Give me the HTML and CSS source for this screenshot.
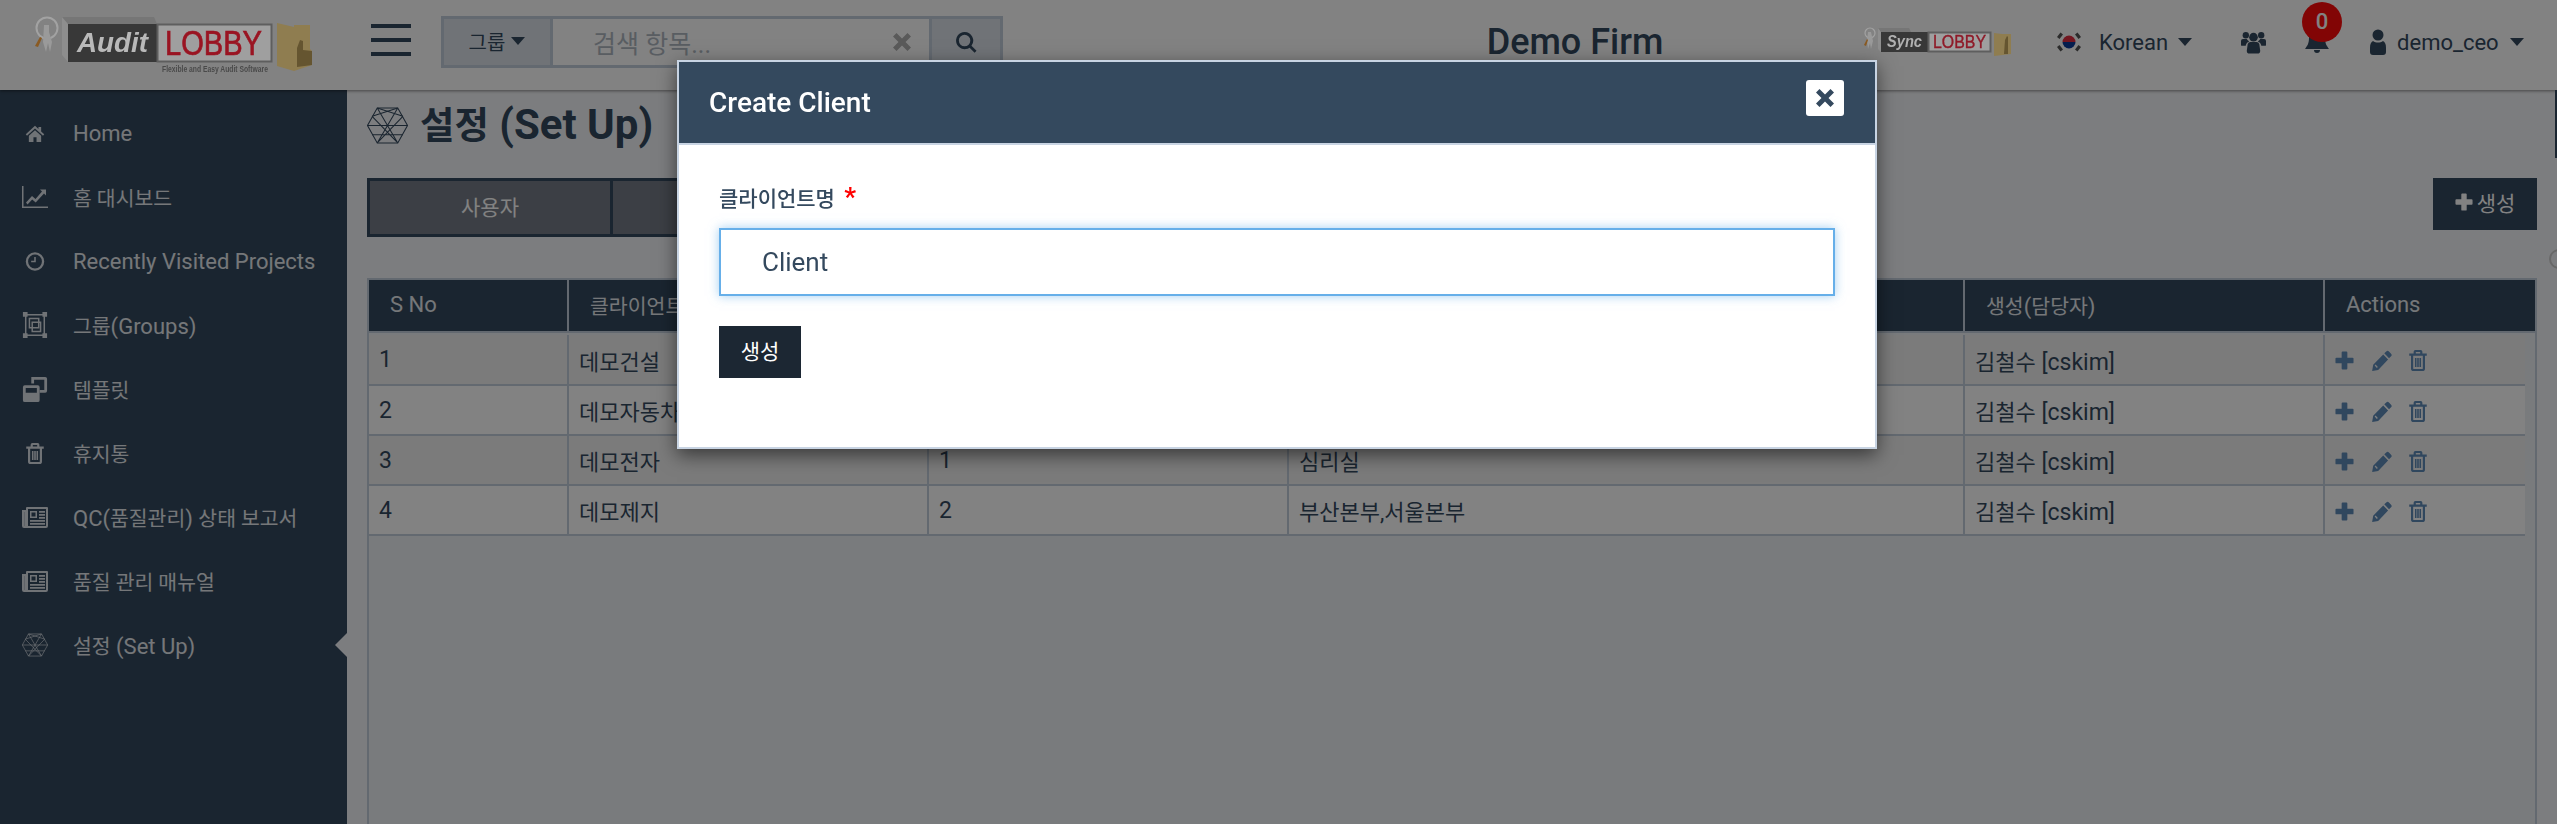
FILE: index.html
```html
<!DOCTYPE html>
<html lang="ko">
<head>
<meta charset="utf-8">
<title>Audit Lobby - 설정</title>
<link rel="stylesheet" href="styles.css">
</head>
<body>
<svg class="defs" width="0" height="0" aria-hidden="true">
  <symbol id="i-home" viewBox="0 0 26 24"><path d="M13 2 1 13l1.6 1.8L13 5.4l10.400 9.400L25 13l-4-3.700V3.500h-3.500v2.600zM5 15v8h6v-6h4v6h6v-8L13 7.800z"/></symbol>
  <symbol id="i-chart" viewBox="0 0 26 24"><path d="M0 1h1.500v20.500H26V23H0z"/><path d="M4 17.500l6-6.500 3.500 3L20 6.500 18 4.500h6v6l-2-2-8.300 9-3.500-3-4.700 5z"/></symbol>
  <symbol id="i-clock" viewBox="0 0 26 26"><path fill-rule="evenodd" d="M13 1a12 12 0 1 0 0 24 12 12 0 0 0 0-24zm0 3a9 9 0 1 1 0 18 9 9 0 0 1 0-18z"/><path d="M12 7h2v7H8v-2h4z"/></symbol>
  <symbol id="i-group" viewBox="0 0 26 28"><g fill="none" stroke="currentColor" stroke-width="1.600"><path d="M3 3h20v22H3z"/><path d="M7 7h10v10H7z"/><path d="M10 11h9v10h-9z"/></g><path d="M0 0h5v5H0zM21 0h5v5h-5zM0 23h5v5H0zM21 23h5v5h-5z"/></symbol>
  <symbol id="i-clone" viewBox="0 0 26 28"><path fill-rule="evenodd" d="M9 1h15a2 2 0 0 1 2 2v13a2 2 0 0 1-2 2h-6v-3h5V4H12v4H9z"/><path d="M2 10h14a2 2 0 0 1 2 2v14a2 2 0 0 1-2 2H2a2 2 0 0 1-2-2V12a2 2 0 0 1 2-2zm1 3v5h12v-5z" fill-rule="evenodd"/></symbol>
  <symbol id="i-trash" viewBox="0 0 20 24"><path fill-rule="evenodd" d="M7 0h6a2 2 0 0 1 2 2v2h5v2.500h-2V21a3 3 0 0 1-3 3H5a3 3 0 0 1-3-3V6.500H0V4h5V2a2 2 0 0 1 2-2zm.500 2.300V4h5V2.300zM4.500 6.500V21a.7.7 0 0 0 .5.6h10a.7.7 0 0 0 .5-.6V6.500z"/><path d="M6.500 9h1.800v10.500H6.500zM9.100 9h1.800v10.500H9.100zM11.700 9h1.800v10.500h-1.800z"/></symbol>
  <symbol id="i-news" viewBox="0 0 26 24"><path fill-rule="evenodd" d="M5 2h20a1 1 0 0 1 1 1v18a2 2 0 0 1-2 2H2a2 2 0 0 1-2-2V5h4V3a1 1 0 0 1 1-1zm1 2v17H2.200V7H2v14h22V4z"/><path d="M8 6h7v7H8zm1.500 1.500v4h4v-4zM17 6h6v1.700h-6zM17 9h6v1.700h-6zM17 12h6v1.700h-6zM8 15h15v1.700H8zM8 18h15v1.700H8z"/></symbol>
  <symbol id="i-hex" viewBox="0 0 40 36"><g fill="none" stroke="currentColor" stroke-width="1"><path d="M10 1h20l9.500 17L30 35H10L.5 18z"/><path d="M10 1l20 34M30 1L10 35M.5 18h39M5 9l25 26M35 9 10 35M10 1l25 8M30 1 5 9M5 27h30"/></g></symbol>
  <symbol id="i-plus" viewBox="0 0 20 20"><path d="M7 1.500a1 1 0 0 1 1-1h4a1 1 0 0 1 1 1V7h5.500a1 1 0 0 1 1 1v4a1 1 0 0 1-1 1H13v5.500a1 1 0 0 1-1 1H8a1 1 0 0 1-1-1V13H1.500a1 1 0 0 1-1-1V8a1 1 0 0 1 1-1H7z"/></symbol>
  <symbol id="i-pencil" viewBox="0 0 21 22"><path d="M15.500 1.500a2 2 0 0 1 2.800 0l2.200 2.300a2 2 0 0 1 0 2.800l-2.100 2.100-5-5.200z"/><path fill-rule="evenodd" d="M12.300 4.600l5.100 5.300L7 21 .7 22 1.800 15.500zM3.300 16.300l2.400 2.500 1-1-2.400-2.500z"/></symbol>
  <symbol id="i-x" viewBox="0 0 18 18"><path d="M3.500 0 9 5.500 14.500 0 18 3.500 12.500 9l5.500 5.500-3.500 3.500L9 12.500 3.500 18 0 14.500 5.500 9 0 3.500z"/></symbol>
  <symbol id="i-search" viewBox="0 0 22 22"><path fill-rule="evenodd" d="M9 0a9 9 0 0 1 7.200 14.400l5.300 5.300-2 2-5.300-5.300A9 9 0 1 1 9 0zm0 3a6 6 0 1 0 0 12A6 6 0 0 0 9 3z"/></symbol>
  <symbol id="i-users" viewBox="0 0 26 24"><circle cx="13" cy="7" r="4.500"/><circle cx="5" cy="5" r="3.300"/><circle cx="21" cy="5" r="3.300"/><path d="M7 14a3 3 0 0 1 3-2h6a3 3 0 0 1 3 2l1 7a3 3 0 0 1-3 3H9a3 3 0 0 1-3-3z"/><path d="M0 11a2 2 0 0 1 2-2h4c.6 1 1.300 1.800 2.500 2.500A5 5 0 0 0 5 15v1H1a1 1 0 0 1-1-1zM26 11a2 2 0 0 0-2-2h-4c-.6 1-1.300 1.800-2.500 2.500A5 5 0 0 1 21 15v1h4a1 1 0 0 0 1-1z"/></symbol>
  <symbol id="i-bell" viewBox="0 0 24 26"><path d="M12 0a2 2 0 0 1 2 2c4 1 6 4 6 8 0 6 2 8 4 11H0c2-3 4-5 4-11 0-4 2-7 6-8a2 2 0 0 1 2-2zM9 22h6a3 3 0 0 1-6 0z"/></symbol>
  <symbol id="i-user" viewBox="0 0 16 26"><circle cx="8" cy="6" r="5.500"/><path d="M3 12c3 2 7 2 10 0 2 1 3 3 3 7v4a3 3 0 0 1-3 3H3a3 3 0 0 1-3-3v-4c0-4 1-6 3-7z"/></symbol>
</svg>

<div class="app">
  <header class="topbar">
    <svg class="logo" viewBox="0 0 320 84" width="320" height="84" role="img" aria-label="Audit Lobby">
      <circle class="lg-man" cx="47" cy="28" r="10.500" fill="none" stroke-width="2"/>
      <path class="lg-fill" d="M44 25h5v7l3 10-2 10-2-9-2 9-3-10z"/>
      <path class="lg-orange" d="M35 46l5-9 2 1-4 9z"/>
      <path class="lg-side" d="M62 17h3l3 7v38l-6-7z"/>
      <path class="lg-top" d="M62 17h92l3 7H68z"/>
      <rect class="lg-dark" x="68" y="24" width="90" height="38"/>
      <rect class="lg-white" x="157.500" y="24.500" width="114" height="37"/>
      <text class="lg-audit" x="77" y="52" textLength="71" lengthAdjust="spacingAndGlyphs">Audit</text>
      <text class="lg-lobby" x="165" y="55" textLength="97" lengthAdjust="spacingAndGlyphs">LOBBY</text>
      <text class="lg-tag" x="162" y="72" textLength="106" lengthAdjust="spacingAndGlyphs">Flexible and Easy Audit Software</text>
      <path class="lg-folder" d="M277 23l17 4V71l-17-5z"/>
      <path class="lg-folder" d="M294 25h16v24l2 2v14l-18 6z"/>
      <path class="lg-shade" d="M297 67V48l3-8 3 1v9l9 1v14z"/>
    </svg>
    <button class="burger" type="button" aria-label="menu"><span></span><span></span><span></span></button>
    <form class="search">
      <button class="search-group" type="button"><span>그룹</span><i class="caret"></i></button>
      <div class="search-field">
        <span class="search-ph">검색 항목...</span>
        <svg class="search-x"><use href="#i-x"/></svg>
      </div>
      <button class="search-go" type="button" aria-label="search"><svg><use href="#i-search"/></svg></button>
    </form>
    <div class="firm">Demo Firm</div>
    <svg class="sync" viewBox="0 0 148 30" width="148" height="30" role="img" aria-label="Sync Lobby">
      <circle class="lg-man" cx="7" cy="6" r="5" fill="none" stroke-width="1.200"/>
      <path class="lg-fill" d="M5 5h3l2 9-2 8-1-6-2 6-1-8z"/>
      <path class="lg-orange" d="M1 18l3-6 1 1-2 6z"/>
      <path class="lg-side" d="M15 1h2l1 4v20l-3-3z"/>
      <path class="lg-top" d="M15 1h31l2 4H18z"/>
      <rect class="lg-dark" x="18" y="5" width="48" height="20"/>
      <rect class="lg-white" x="65.500" y="5.500" width="62" height="19"/>
      <text class="sy-sync" x="24" y="20" textLength="35" lengthAdjust="spacingAndGlyphs">Sync</text>
      <text class="sy-lobby" x="70" y="21" textLength="53" lengthAdjust="spacingAndGlyphs">LOBBY</text>
      <path class="lg-folder" d="M131 6l8 1h9v20l-17 2z"/>
      <path class="lg-shade" d="M141 27l1-14 2-4 1 1v17z"/>
    </svg>
    <div class="lang">
      <svg class="flag" viewBox="0 0 26 22" width="26" height="22" aria-hidden="true">
        <path class="fl-red" d="M6.500 11a6.500 6.500 0 0 1 13 0z"/>
        <path class="fl-blue" d="M6.500 11a6.500 6.500 0 0 0 13 0z"/>
        <path class="fl-bar" d="M1 6l3.500-4.500 2.500 2L3.500 8zM19 3.500l2.500-2L25 6l-2.500 2zM1 16l2.500-2L7 18.500l-2.500 2zM19 18.500l3.500-4.500 2.500 2-3.500 4.500z"/>
      </svg>
      <span>Korean</span><i class="caret"></i>
    </div>
    <svg class="ic-users"><use href="#i-users"/></svg>
    <div class="bell">
      <svg><use href="#i-bell"/></svg>
      <span class="badge">0</span>
    </div>
    <div class="account">
      <svg><use href="#i-user"/></svg>
      <span>demo_ceo</span><i class="caret"></i>
    </div>
  </header>

  <div class="body">
    <nav class="side">
      <a class="side-item"><svg class="sm"><use href="#i-home"/></svg><span>Home</span></a>
      <a class="side-item"><svg><use href="#i-chart"/></svg><span class="ko">홈 대시보드</span></a>
      <a class="side-item"><svg class="sm"><use href="#i-clock"/></svg><span>Recently Visited Projects</span></a>
      <a class="side-item"><svg><use href="#i-group"/></svg><span><span class="ko">그룹</span>(Groups)</span></a>
      <a class="side-item"><svg><use href="#i-clone"/></svg><span class="ko">템플릿</span></a>
      <a class="side-item"><svg class="sm"><use href="#i-trash"/></svg><span class="ko">휴지통</span></a>
      <a class="side-item"><svg><use href="#i-news"/></svg><span>QC(<span class="ko">품질관리</span>) <span class="ko">상태 보고서</span></span></a>
      <a class="side-item"><svg><use href="#i-news"/></svg><span class="ko">품질 관리 매뉴얼</span></a>
      <a class="side-item is-active"><svg><use href="#i-hex"/></svg><span><span class="ko">설정</span> (Set Up)</span></a>
    </nav>

    <main class="main">
      <h1 class="page-title"><svg><use href="#i-hex"/></svg><span><span class="ko">설정</span> (Set Up)</span></h1>
      <div class="toolbar">
        <div class="tabs">
          <a class="tab">사용자</a>
          <a class="tab"></a>
        </div>
        <button class="btn-create" type="button"><svg><use href="#i-plus"/></svg>생성</button>
      </div>
      <div class="grid">
        <table class="grid-head">
          <colgroup><col class="c1"><col class="c2"><col class="c3"><col class="c4"><col class="c5"><col></colgroup>
          <thead><tr><th>S No</th><th class="ko">클라이언트명</th><th></th><th></th><th><span class="ko">생성</span>(<span class="ko">담당자</span>)</th><th>Actions</th></tr></thead>
        </table>
        <div class="grid-scroll">
          <table class="grid-body">
            <colgroup><col class="c1"><col class="c2"><col class="c3"><col class="c4"><col class="c5"><col></colgroup>
            <tbody>
              <tr><td>1</td><td class="ko">데모건설</td><td></td><td></td><td><span class="ko">김철수</span> [cskim]</td><td class="acts"><svg class="a-plus"><use href="#i-plus"/></svg><svg class="a-pen"><use href="#i-pencil"/></svg><svg class="a-bin"><use href="#i-trash"/></svg></td></tr>
              <tr><td>2</td><td class="ko">데모자동차</td><td></td><td></td><td><span class="ko">김철수</span> [cskim]</td><td class="acts"><svg class="a-plus"><use href="#i-plus"/></svg><svg class="a-pen"><use href="#i-pencil"/></svg><svg class="a-bin"><use href="#i-trash"/></svg></td></tr>
              <tr><td>3</td><td class="ko">데모전자</td><td>1</td><td class="ko">심리실</td><td><span class="ko">김철수</span> [cskim]</td><td class="acts"><svg class="a-plus"><use href="#i-plus"/></svg><svg class="a-pen"><use href="#i-pencil"/></svg><svg class="a-bin"><use href="#i-trash"/></svg></td></tr>
              <tr><td>4</td><td class="ko">데모제지</td><td>2</td><td class="ko">부산본부,서울본부</td><td><span class="ko">김철수</span> [cskim]</td><td class="acts"><svg class="a-plus"><use href="#i-plus"/></svg><svg class="a-pen"><use href="#i-pencil"/></svg><svg class="a-bin"><use href="#i-trash"/></svg></td></tr>
            </tbody>
          </table>
        </div>
      </div>
    </main>
  </div>
  <span class="edge-bar"></span>
  <span class="edge-dot"></span>
</div>

<div class="backdrop"></div>
<section class="modal" role="dialog" aria-label="Create Client">
  <div class="modal-head">
    <h2>Create Client</h2>
    <button class="modal-close" type="button" aria-label="close"><svg><use href="#i-x"/></svg></button>
  </div>
  <form class="modal-body">
    <label class="field-label" for="client">클라이언트명 <em>*</em></label>
    <input class="field-input" id="client" type="text" value="Client">
    <button class="btn-submit" type="button">생성</button>
  </form>
</section>
</body>
</html>
```

FILE: styles.css
```css
* { box-sizing: border-box; }
html, body { margin: 0; height: 100%; overflow: hidden; }
body {
  font-family: Roboto, "Noto Sans CJK KR", sans-serif;
  color: #34495e;
  background: #f4f6f9;
}
.defs { position: absolute; }
button { font-family: inherit; border: 0; padding: 0; }
svg { fill: currentColor; display: block; }

.app { display: flex; flex-direction: column; height: 824px; width: 2557px; position: relative; }

/* top bar */
.topbar {
  height: 90px; flex: none; display: flex; align-items: center; padding-bottom: 6px;
  background: #fff; box-shadow: 0 1px 3px rgba(0,0,0,.45); position: relative;
}
/* the two logo images stay a little brighter than the dimmed page */
.logo, .sync { flex: none; position: relative; z-index: 6; }
.logo text, .sync text { font-family: "Liberation Sans", sans-serif; }
.lg-man { stroke: #a2a2a2; }
.lg-fill { fill: #9a9a9a; }
.lg-orange { fill: #8a5a22; }
.lg-side { fill: #8e8e8e; }
.lg-top { fill: #767676; }
.lg-dark { fill: #383838; }
.lg-white { fill: #9f9f9f; stroke: #5e5e5e; stroke-width: 2; }
.lg-audit { font-size: 28px; font-weight: 700; font-style: italic; fill: #b9b9b9; }
.lg-lobby { font-size: 35px; fill: #9a1422; stroke: #9a1422; stroke-width: .7; }
.lg-tag { font-size: 9px; font-weight: 700; fill: #4a4a4a; }
.lg-folder { fill: #8f7d50; }
.lg-shade { fill: #655530; }
.sy-sync { font-size: 16px; font-weight: 700; font-style: italic; fill: #b0b0b0; }
.sy-lobby { font-size: 19px; fill: #8f1a28; stroke: #8f1a28; stroke-width: .4; }

.burger { width: 40px; height: 32px; margin: 0 0 4px 51px; background: none; display: flex; flex-direction: column; justify-content: space-between; flex: none; }
.burger span { display: block; height: 4px; background: #34495e; }

.caret { display: inline-block; width: 0; height: 0; border-left: 7.500px solid transparent; border-right: 7.500px solid transparent; border-top: 8px solid currentColor; }

.search { width: 562px; height: 52px; margin-left: 30px; display: flex; flex: none; border: 3px solid #c3cfdc; }
.search-group { width: 109px; background: #dbe2ea; color: #34495e; font-size: 20px; display: flex; align-items: center; justify-content: center; gap: 6px; border-right: 3px solid #c3cfdc; padding-bottom: 2px; }
.search-field { flex: 1; display: flex; align-items: center; justify-content: space-between; padding: 0 18px 0 40px; background: #fff; }
.search-ph { font-size: 25px; color: #aeb7c0; }
.search-x { width: 18px; height: 18px; color: #b0b0b0; }
.search-go { width: 71px; background: #dbe2ea; color: #34495e; display: flex; align-items: center; justify-content: center; border-left: 3px solid #c3cfdc; }
.search-go svg { width: 21px; height: 21px; }

.firm { flex: none; width: 180px; margin: 0 198px 0 482px; text-align: center; font-size: 36px; font-weight: 500; color: #34495e; white-space: nowrap; }
.lang { display: flex; align-items: center; margin-left: 45px; font-size: 22px; }
.lang span { margin-left: 17px; }
.lang .caret { margin-left: 10px; }
.fl-red { fill: #e02c40; }
.fl-blue { fill: #0a3a9a; }
.fl-bar { fill: #555; }
.ic-users { width: 25px; height: 24px; margin-left: 49px; flex: none; }
.bell { width: 24px; height: 26px; margin: 0 0 3px 39px; position: relative; flex: none; }
.bell svg { width: 24px; height: 26px; }
.badge { position: absolute; left: -3px; top: -26px; width: 40px; height: 40px; border-radius: 50%; background: #ff0a0a; color: #fff; font-size: 22px; font-weight: 500; display: flex; align-items: center; justify-content: center; }
.account { display: flex; align-items: center; margin-left: 41px; font-size: 22px; }
.account svg { width: 16px; height: 26px; }
.account span { margin-left: 11px; }
.account .caret { margin-left: 11px; }

/* body */
.body { flex: 1; display: flex; min-height: 0; }
.side { width: 347px; flex: none; background: #34495e; padding-top: 11px; color: #e6eaee; }
.side .ko { font-size: .93em; }
.side-item { display: flex; align-items: center; height: 64px; padding-left: 22px; gap: 25px; font-size: 22px; position: relative; }
.side-item svg { width: 26px; height: 26px; flex: none; color: #dbe1e8; }
.side-item svg.sm { width: 20px; height: 21px; margin: 0 3px; }
.is-active::after { content: ""; position: absolute; right: 0; top: 20px; border: 12px solid transparent; border-left: 0; border-right-color: #f4f6f9; }

.main { flex: 1; padding: 0 20px; display: flex; flex-direction: column; min-width: 0; }
.page-title { margin: 0; height: 88px; padding-bottom: 18px; display: flex; align-items: center; gap: 12px; font-size: 42px; font-weight: 700; color: #34495e; line-height: 1; }
.page-title .ko { font-size: .89em; }
.page-title svg { width: 41px; height: 37px; flex: none; }

.toolbar { display: flex; justify-content: space-between; align-items: flex-start; margin-bottom: 41px; height: 59px; }
.tabs { display: flex; border: 3px solid #34495e; height: 59px; }
.tab { width: 240px; display: flex; align-items: center; justify-content: center; background: #777d87; color: #fff; font-size: 21px; padding-bottom: 3px; }
.tab + .tab { border-left: 3px solid #34495e; width: 300px; }
.btn-create { width: 104px; height: 52px; background: #34495e; color: #fff; font-size: 21px; display: flex; align-items: center; justify-content: center; gap: 4px; padding-bottom: 5px; }
.btn-create svg { width: 18px; height: 18px; }

/* grid */
.grid { flex: 1; border: 2px solid #c3cfdc; border-bottom: 0; display: flex; flex-direction: column; min-height: 0; }
.grid table { border-collapse: collapse; table-layout: fixed; width: 100%; }
.c1 { width: 199px; }
.c2 { width: 360px; }
.c3 { width: 360px; }
.c4 { width: 676px; }
.c5 { width: 360px; }
.grid-head { flex: none; border-bottom: 2px solid #c3cfdc; }
.grid-head th { height: 52px; background: #34495e; color: #e6eaee; font-size: 22px; font-weight: 400; text-align: left; padding: 0 0 2px 21px; border-left: 2px solid #c3cfdc; }
.grid-head th:first-child { border-left: 0; }
.grid-head .ko { font-size: 20.500px; }
.grid-scroll { flex: 1; padding: 2px 10px 0 0; background: #eef1f5; }
.grid-body td { height: 50px; font-size: 23px; color: #34495e; padding: 0 0 0 10px; border-left: 2px solid #c3cfdc; border-bottom: 2px solid #c3cfdc; }
.grid-body td:first-child { border-left: 0; }
.grid-body .ko { font-size: 22px; }
.grid-body tr { background: #fff; }
.grid-body tr:nth-child(odd) { background: #f2f2f2; }
.grid-body .acts { padding: 0 0 0 10px; }
.acts svg { display: inline-block; vertical-align: middle; color: #5f8bb8; }
.a-plus { width: 19px; height: 19px; }
.a-pen { width: 21px; height: 21px; margin-left: 17px; }
.a-bin { width: 18px; height: 21px; margin-left: 17px; }

.edge-bar { position: absolute; right: 0; top: 90px; width: 2px; height: 68px; background: #34495e; }
.edge-dot { position: absolute; left: 2549px; top: 249px; width: 20px; height: 20px; border: 2px solid #ccc; border-radius: 50%; }

/* modal */
.backdrop { position: fixed; inset: 0; background: rgba(0,0,0,.49); z-index: 5; }
.modal { position: fixed; left: 677px; top: 60px; width: 1200px; height: 389px; z-index: 7; background: #fff; border: 2px solid #c8d4e3; box-shadow: 0 6px 18px rgba(0,0,0,.55); }
.modal-head { height: 83px; background: #34495e; border-bottom: 2px solid #c8d4e3; display: flex; align-items: center; justify-content: space-between; padding: 0 31px 0 30px; }
.modal-head h2 { margin: 0; color: #fff; font-size: 28px; font-weight: 500; }
.modal-close { width: 38px; height: 36px; background: #fff; border-radius: 3px; color: #34495e; display: flex; align-items: center; justify-content: center; position: relative; top: -5px; }
.modal-close svg { width: 18px; height: 18px; }
.modal-body { padding: 40px 40px 0 40px; display: flex; flex-direction: column; align-items: flex-start; }
.field-label { font-size: 21px; font-weight: 500; color: #34495e; height: 43px; line-height: 28px; }
.field-label em { color: #f00; font-style: normal; font-size: 26px; font-weight: 700; margin-left: 4px; line-height: 0; }
.field-input { width: 1116px; height: 68px; border: 2px solid #66afe9; outline: 0; padding: 0 41px; font-family: inherit; font-size: 26px; color: #34495e; box-shadow: 0 0 10px rgba(102,175,233,.6); }
.btn-submit { margin-top: 30px; width: 82px; height: 52px; background: #1c2733; color: #fff; font-size: 21px; padding-bottom: 4px; }
```
